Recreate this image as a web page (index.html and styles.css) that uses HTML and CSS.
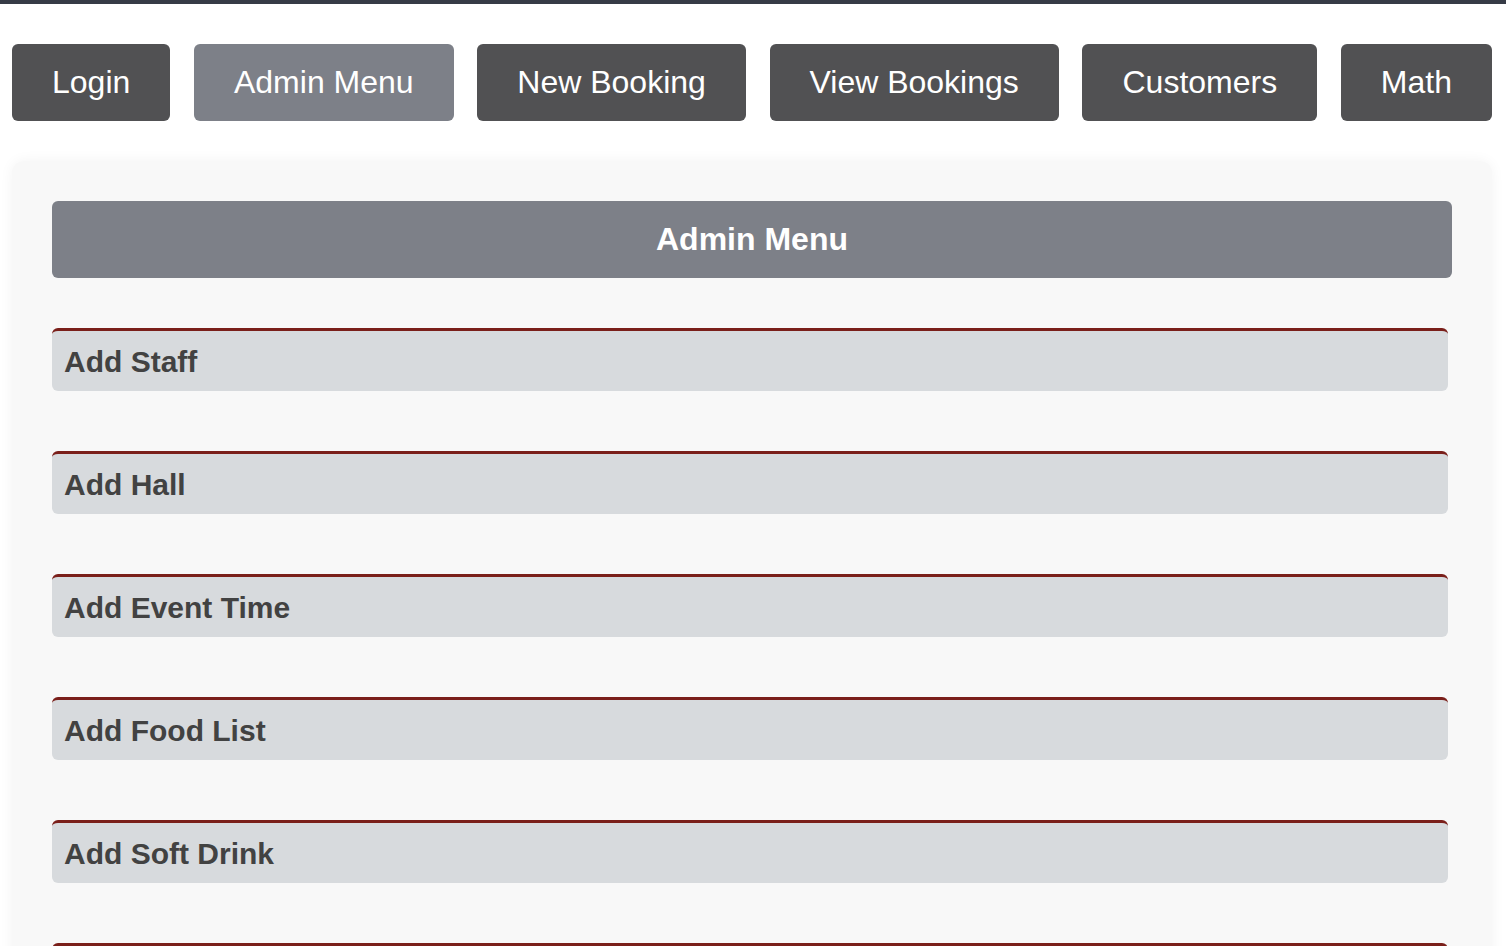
FILE: index.html
```html
<!DOCTYPE html>
<html lang="en">
<head>
<meta charset="utf-8">
<title>Admin Menu</title>
<link rel="stylesheet" href="styles.css">
</head>
<body>
<div class="topline"></div>
<nav class="nav">
  <a class="nav-btn" href="#">Login</a>
  <a class="nav-btn active" href="#">Admin Menu</a>
  <a class="nav-btn" href="#">New Booking</a>
  <a class="nav-btn" href="#">View Bookings</a>
  <a class="nav-btn" href="#">Customers</a>
  <a class="nav-btn" href="#">Math</a>
</nav>
<main class="card">
  <h1 class="card-title">Admin Menu</h1>
  <ul class="menu">
    <li class="menu-item">Add Staff</li>
    <li class="menu-item">Add Hall</li>
    <li class="menu-item">Add Event Time</li>
    <li class="menu-item">Add Food List</li>
    <li class="menu-item">Add Soft Drink</li>
    <li class="menu-item">Add Decoration</li>
  </ul>
</main>
</body>
</html>
```
FILE: styles.css
```css
* { box-sizing: border-box; }
html, body {
  margin: 0;
  padding: 0;
  background: #ffffff;
  font-family: "Liberation Sans", Arial, Helvetica, sans-serif;
}
.topline {
  height: 4px;
  background: #363b46;
}
.nav {
  display: flex;
  justify-content: space-between;
  padding: 40px 14px 0 12px;
}
.nav-btn {
  display: block;
  background: #515153;
  color: #ffffff;
  text-decoration: none;
  font-size: 32px;
  line-height: 37px;
  padding: 20px 40px;
  border-radius: 6px;
}
.nav-btn.active {
  background: #7d8088;
}
.card {
  margin: 40px 14px 40px 12px;
  padding: 40px;
  background: #f8f8f8;
  border-radius: 12px;
  box-shadow: 0 0 14px rgba(0, 0, 0, 0.05);
}
.card-title {
  margin: 0;
  background: #7d8088;
  color: #ffffff;
  font-size: 32px;
  line-height: 37px;
  font-weight: bold;
  text-align: center;
  padding: 20px 0;
  border-radius: 6px;
}
.menu {
  list-style: none;
  margin: 50px 4px 0 0;
  padding: 0;
  display: flex;
  flex-direction: column;
  gap: 60px;
}
.menu-item {
  background: #d7dadd;
  border-top: 3px solid #7a1f1a;
  border-radius: 6px;
  color: #424242;
  font-size: 30px;
  font-weight: bold;
  line-height: 34px;
  padding: 14px 12px 12px;
}
```
